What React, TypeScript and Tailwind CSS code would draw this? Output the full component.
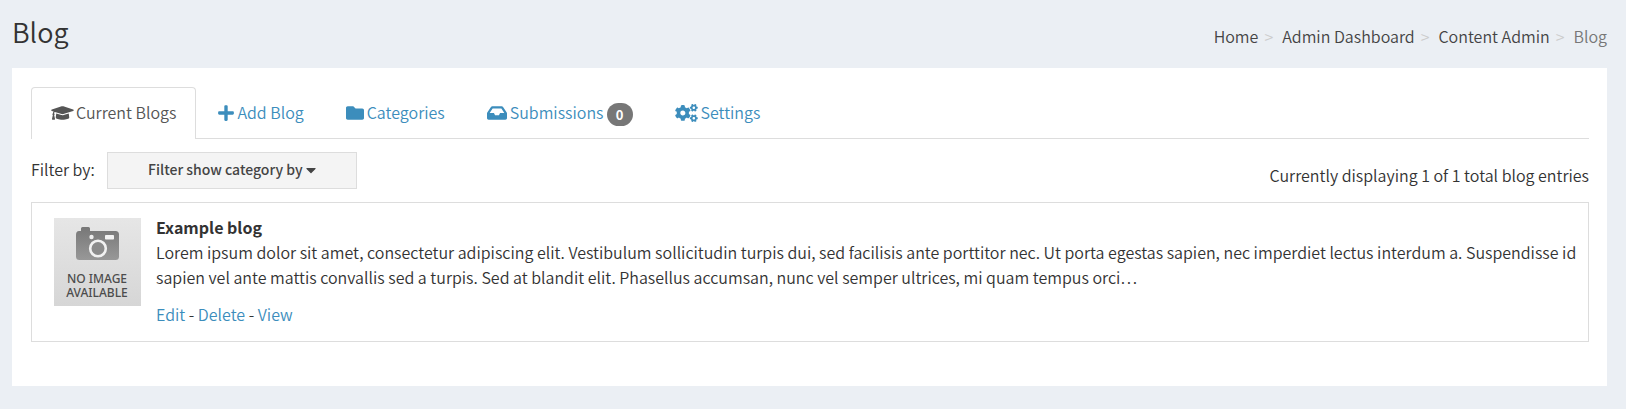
import type { ReactNode } from "react";
import { FaCaretDown, FaCogs, FaFolder, FaGraduationCap, FaInbox, FaPlus } from "react-icons/fa";

type Tab = { label: string; icon: ReactNode; count?: number; active?: boolean };

const crumbs = ["Home", "Admin Dashboard", "Content Admin"];

const tabs: Tab[] = [
  { label: "Current Blogs", icon: <FaGraduationCap className="h-[18px] w-[23px]" />, active: true },
  { label: "Add Blog", icon: <FaPlus className="h-[18px] w-4" /> },
  { label: "Categories", icon: <FaFolder className="h-[18px] w-[18px]" /> },
  { label: "Submissions", icon: <FaInbox className="h-[18px] w-5" />, count: 0 },
  { label: "Settings", icon: <FaCogs className="h-[18px] w-[23px]" /> },
];

function NoImage() {
  return (
    <svg viewBox="0 0 87 88" className="h-[88px] w-[87px] shrink-0" role="img" aria-label="No image available">
      <defs>
        <linearGradient id="plate" x1="0" y1="0" x2="0" y2="1">
          <stop offset="0" stopColor="#e6e6e6" />
          <stop offset="1" stopColor="#d6d6d6" />
        </linearGradient>
        <linearGradient id="body" x1="0" y1="0" x2="0" y2="1">
          <stop offset="0" stopColor="#777777" />
          <stop offset="1" stopColor="#989898" />
        </linearGradient>
      </defs>
      <rect width="87" height="88" fill="url(#plate)" />
      <path
        d="M25 13H27V10.500Q27 9 28.500 9H34.500Q36 9 36 10.500V13H61.500Q65 13 65 16.500V38.500Q65 42 61.500 42H25.500Q22 42 22 38.500V17Q22 13 25 13Z"
        fill="url(#body)"
      />
      <circle cx="37.500" cy="19" r="2.200" fill="#eeeeee" />
      <rect x="51" y="17" width="9" height="4.500" rx="0.800" fill="#f2f2f2" />
      <circle cx="44" cy="30.500" r="7.800" fill="#8c8c8c" stroke="#f2f2f2" strokeWidth="2.600" />
      <g fill="#4c4c4c" textAnchor="middle" fontFamily="'Noto Sans', sans-serif" fontWeight="500" fontSize="12">
        <text x="43" y="65">NO IMAGE</text>
        <text x="43" y="79">AVAILABLE</text>
      </g>
    </svg>
  );
}

export default function App() {
  return (
    <div className="min-h-screen bg-[#ebeff4] pr-[19px] pb-[23px] pl-3 font-['Noto_Sans_CJK_SC',sans-serif] text-[16px] leading-[25px] font-[350] text-[#333333]">
      <header className="flex h-[68px] items-center justify-between">
        <h1 className="pb-1 text-[27px] leading-[30px]">Blog</h1>
        <nav aria-label="Breadcrumb" className="pt-1">
          <ol className="flex items-center">
            {crumbs.map((crumb) => (
              <li key={crumb} className="flex items-center">
                <a href="#" className="text-[#444444]">{crumb}</a>
                <span aria-hidden="true" className="pr-[9px] pl-1.5 text-[#cccccc]">&gt;</span>
              </li>
            ))}
            <li aria-current="page" className="text-[#777777]">Blog</li>
          </ol>
        </nav>
      </header>

      <main className="bg-white pt-[19px] pr-[18px] pb-11 pl-[19px]">
        <nav aria-label="Blog sections" className="flex gap-0.5 border-b border-[#dddddd]">
          {tabs.map((tab) => (
            <a
              key={tab.label}
              href="#"
              aria-current={tab.active ? "page" : undefined}
              className={
                tab.active
                  ? "-mb-px flex h-[52px] items-center gap-0.5 rounded-t border border-b-0 border-[#dddddd] bg-white px-[19px] pb-0.5 text-[#555555]"
                  : "flex h-[51px] items-center gap-[3px] px-5 text-[#3c8dbc]"
              }
            >
              {tab.icon}
              <span>{tab.label}</span>
              {tab.count !== undefined && (
                <span className="mt-1 flex h-[23px] w-[26px] items-center justify-center rounded-full bg-[#777777] text-[13px] font-bold text-white">
                  {tab.count}
                </span>
              )}
            </a>
          ))}
        </nav>

        <div className="flex items-start justify-between pt-[13px] pb-[13px]">
          <div className="flex items-center gap-3">
            <span id="filter-label" className="pb-0.5">Filter by:</span>
            <button
              type="button"
              aria-describedby="filter-label"
              className="flex h-[37px] w-[250px] items-center justify-center gap-[3px] border border-[#dddddd] bg-[#f4f4f4] pb-0.5 text-[14px] font-medium text-[#444444]"
            >
              Filter show category by
              <FaCaretDown className="h-4 w-2.5" />
            </button>
          </div>
          <p className="pt-[11px]">Currently displaying 1 of 1 total blog entries</p>
        </div>

        <article className="flex gap-[15px] border border-[#dddddd] pt-[15px] pr-2 pb-3.5 pl-[22px]">
          <NoImage />
          <div className="-mt-[3px] min-w-0">
            <h2 className="font-bold">Example blog</h2>
            <p>
              Lorem ipsum dolor sit amet, consectetur adipiscing elit. Vestibulum sollicitudin turpis dui, sed facilisis
              ante porttitor nec. Ut porta egestas sapien, nec imperdiet lectus interdum a. Suspendisse id sapien vel
              ante mattis convallis sed a turpis. Sed at blandit elit. Phasellus accumsan, nunc vel semper ultrices, mi
              quam tempus orci…
            </p>
            <p className="pt-3">
              <a href="#" className="text-[#3c8dbc]">Edit</a> - <a href="#" className="text-[#3c8dbc]">Delete</a> -{" "}
              <a href="#" className="text-[#3c8dbc]">View</a>
            </p>
          </div>
        </article>
      </main>
    </div>
  );
}
